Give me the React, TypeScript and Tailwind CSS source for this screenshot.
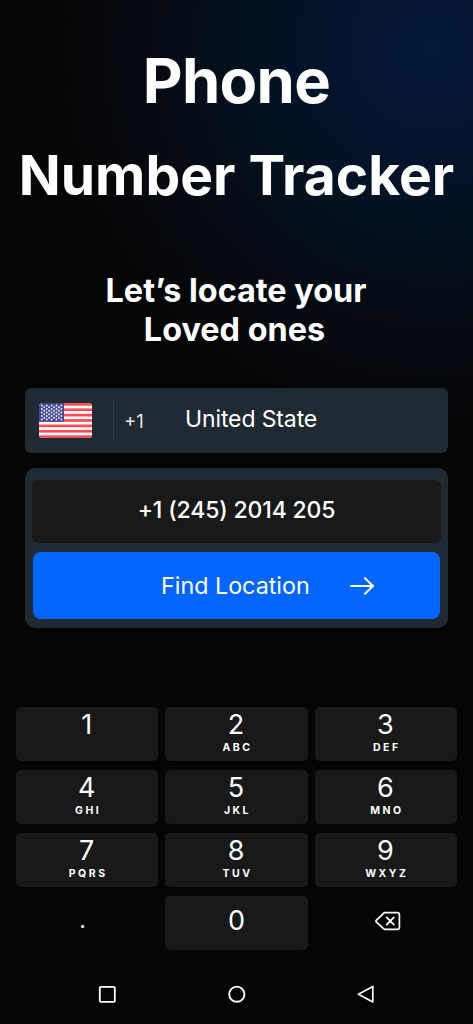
import React, { useState } from "react";

const keys = [
  { digit: "1", letters: "" },
  { digit: "2", letters: "ABC" },
  { digit: "3", letters: "DEF" },
  { digit: "4", letters: "GHI" },
  { digit: "5", letters: "JKL" },
  { digit: "6", letters: "MNO" },
  { digit: "7", letters: "PQRS" },
  { digit: "8", letters: "TUV" },
  { digit: "9", letters: "WXYZ" },
];

const Flag: React.FC = () => (
  <svg width="53" height="35" viewBox="0 0 53 35" className="shrink-0">
    <defs>
      <clipPath id="flag">
        <rect width="53" height="35" rx="3.5" />
      </clipPath>
    </defs>
    <g clipPath="url(#flag)">
      <rect width="53" height="35" fill="#fff" />
      {[0, 1, 2, 3, 4, 5, 6].map((i) => (
        <rect key={i} y={i * 5.385} width="53" height="2.69" fill="#ff4b55" />
      ))}
      <rect width="25" height="18.8" fill="#41479b" />
      {[0, 1, 2, 3, 4, 5, 6, 7, 8].map((row) =>
        Array.from({ length: row % 2 ? 4 : 5 }).map((_, col) => (
          <circle
            key={`${row}-${col}`}
            cx={2.8 + col * 4.9 + (row % 2 ? 2.45 : 0)}
            cy={2.5 + row * 1.75}
            r="0.9"
            fill="#fff"
          />
        ))
      )}
    </g>
  </svg>
);

const Arrow: React.FC = () => (
  <svg
    width="24"
    height="18"
    viewBox="0 0 24 18"
    fill="none"
    stroke="#fff"
    strokeWidth="2.1"
    strokeLinecap="round"
    strokeLinejoin="round"
  >
    <path d="M1 9H23" strokeWidth="1.9" />
    <path d="M15 1.2L22.9 9L15 16.8" />
  </svg>
);

const Backspace: React.FC = () => (
  <svg
    width="26"
    height="20"
    viewBox="0 0 26 20"
    fill="none"
    stroke="#fff"
    strokeWidth="1.7"
    strokeLinecap="round"
    strokeLinejoin="round"
  >
    <path d="M9.4 1.6H22.2A2.2 2.2 0 0 1 24.4 3.8V16.2A2.2 2.2 0 0 1 22.2 18.4H9.4L1.2 10.8Q0.7 10.1 1.2 9.4Z" />
    <path d="M11.7 6.4L18.8 13.6M18.8 6.4L11.7 13.6" />
  </svg>
);

const Key: React.FC<{
  digit: string;
  letters?: string;
  onPress: (digit: string) => void;
}> = ({ digit, letters, onPress }) => (
  <button
    className="flex h-[54px] flex-col items-center rounded-[5px] bg-[#191919]"
    onClick={() => onPress(digit)}
  >
    <span
      className={
        letters === undefined
          ? "mt-[9px] text-[27px] leading-[32px]"
          : "mt-[2px] pr-px text-[27px] leading-[32px]"
      }
    >
      {digit}
    </span>
    {letters && (
      <span className="pl-[2px] text-[10.5px] font-bold leading-[14px] tracking-[2.5px]">
        {letters}
      </span>
    )}
  </button>
);

const App: React.FC = () => {
  const [phone, setPhone] = useState("+1 (245) 2014 205");

  const handlePress = (value: string) => setPhone(phone + value);
  const handleDelete = () => setPhone(phone.slice(0, -1));

  return (
    <main className="flex h-[1024px] w-[473px] flex-col overflow-hidden bg-[#050505] bg-[radial-gradient(circle_380px_at_432px_48px,#041a38_0%,#03142b_30%,#04101c_54%,#060b14_72%,#050505_100%)] font-['Inter',sans-serif] text-white">
      {/* Heading */}
      <h1 className="pt-[35px] text-center font-bold">
        <span className="block text-[61.5px] leading-[92px] tracking-[-0.7px]">
          Phone
        </span>
        <span className="mt-[2px] block whitespace-nowrap text-[55.1px] leading-[92px]">
          Number Tracker
        </span>
      </h1>
      <h2 className="mt-[50px] pr-px text-center text-[32.4px] font-bold leading-[39px]">
        Let’s locate your
        <br />
        <span className="pr-[3px]">Loved ones</span>
      </h2>

      {/* Country */}
      <section className="mx-[25px] mt-[39px] flex h-[65px] w-[423px] shrink-0 items-center rounded-[6px] bg-[#202a32] pl-[14px]">
        <Flag />
        <span className="ml-[21px] h-[39px] w-px bg-[#343c44]" />
        <span className="ml-[10px] w-[61px] text-[18.5px] leading-6 text-[#e8e8e8]">
          +1
        </span>
        <span className="pb-[3px] text-[23px] leading-7 tracking-[-0.12px]">
          United State
        </span>
      </section>

      {/* Phone number */}
      <section className="mx-[25px] mt-[15px] flex h-[160px] w-[423px] shrink-0 flex-col items-center rounded-[10px] bg-[#202a32] pt-[12px]">
        <div className="flex h-[63px] w-[409px] items-center justify-center rounded-[6px] bg-[#191919] pb-[3px] text-[23px] font-medium tracking-[-0.15px]">
          {phone}
        </div>
        <button className="mt-[9px] flex h-[67px] w-[407px] items-center rounded-[8px] bg-[#0066ff] pl-[128px] text-[23.3px]">
          <span className="w-[189px] pt-px text-left">Find Location</span>
          <Arrow />
        </button>
      </section>

      {/* Keypad */}
      <section className="mx-[16px] mt-[79px] grid grid-cols-3 gap-x-[7px] gap-y-[9px]">
        {keys.map((key) => (
          <Key key={key.digit} {...key} onPress={handlePress} />
        ))}
        <button
          className="flex justify-center pr-[9px] pt-[8px] text-[23px] leading-[32px]"
          onClick={() => handlePress(".")}
        >
          .
        </button>
        <Key digit="0" onPress={handlePress} />
        <button
          className="flex items-start justify-center pl-[4px] pt-[15px]"
          onClick={handleDelete}
          aria-label="Delete"
        >
          <Backspace />
        </button>
      </section>

      {/* System navigation */}
      <nav className="mt-[35px] flex justify-between pl-[98px] pr-[98px]">
        <svg width="18" height="18" fill="none" stroke="#fff" strokeWidth="1.8">
          <rect x="1.8" y="1.8" width="15" height="15" rx="1" />
        </svg>
        <svg width="18" height="18" fill="none" stroke="#fff" strokeWidth="1.9">
          <circle cx="8.8" cy="9.2" r="7.6" />
        </svg>
        <svg
          width="18"
          height="18"
          fill="none"
          stroke="#fff"
          strokeWidth="1.7"
          strokeLinejoin="round"
        >
          <path d="M15.8 1.4V17L1.4 9.3Z" />
        </svg>
      </nav>
    </main>
  );
};

export default App;
